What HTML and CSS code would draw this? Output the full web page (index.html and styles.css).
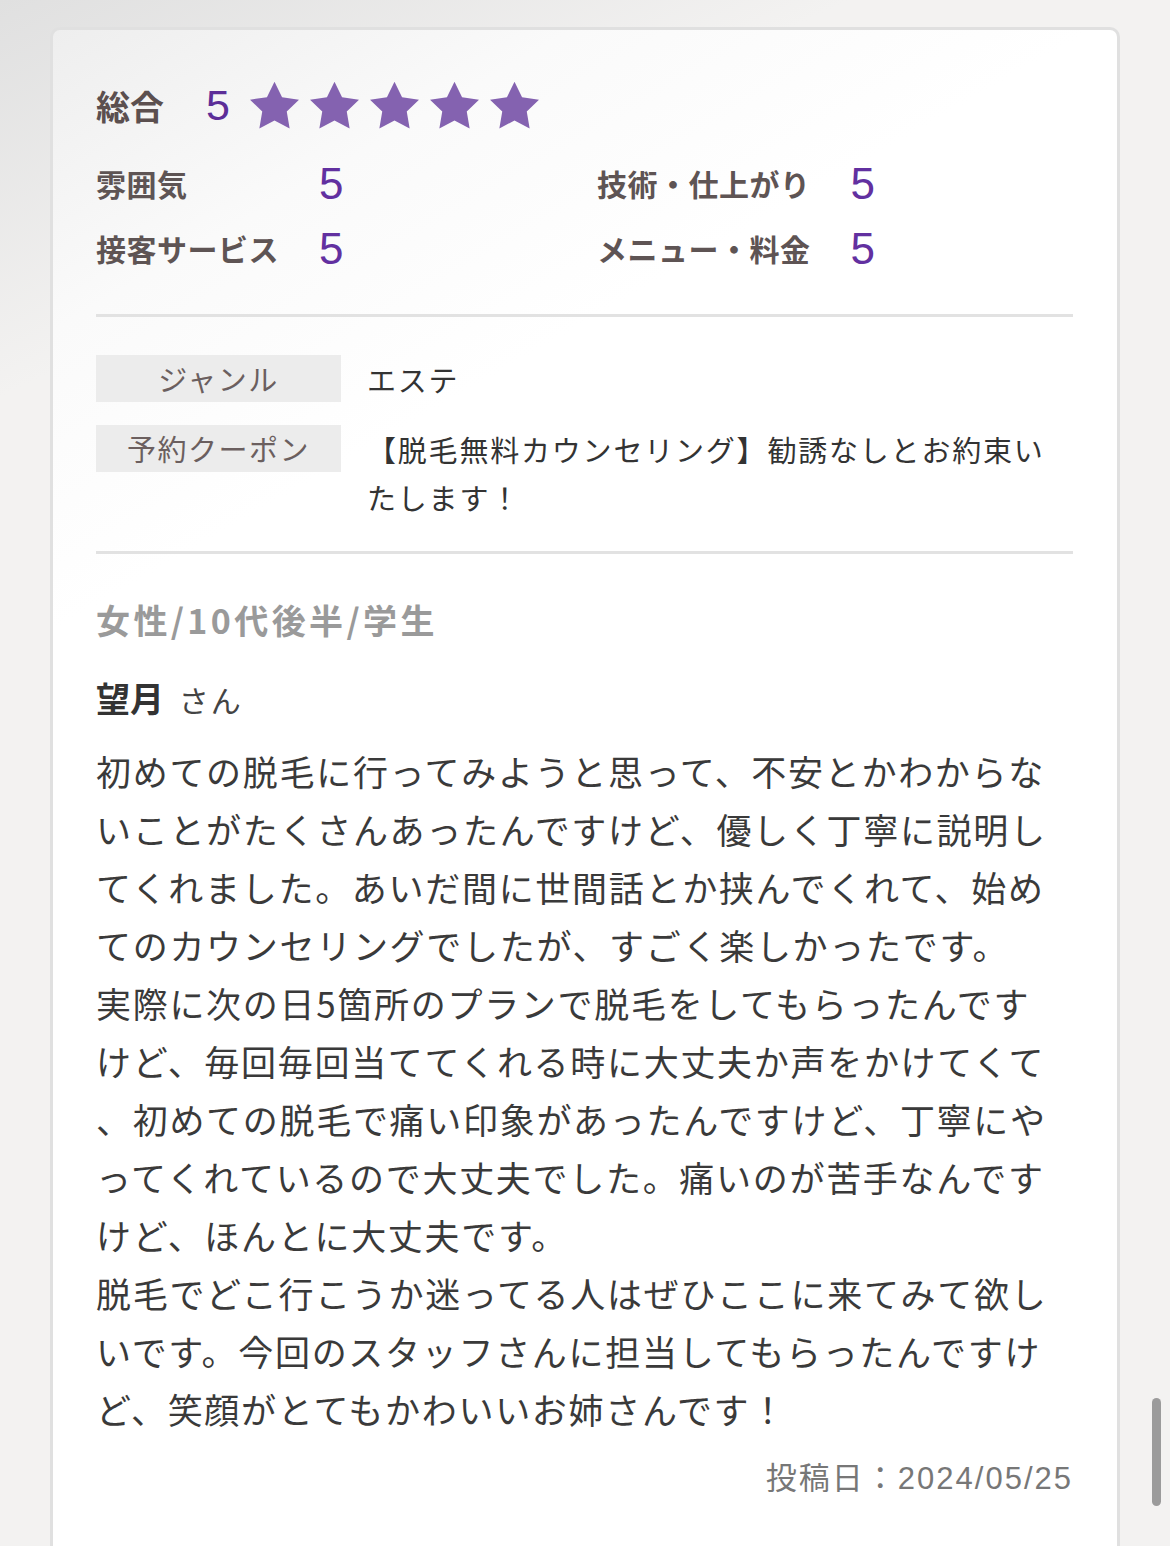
FILE: index.html
```html
<!DOCTYPE html>
<html lang="ja">
<head>
    <meta charset="UTF-8">
    <title>口コミ</title>
    <link rel="stylesheet" href="styles.css">
</head>
<body>
<div class="card">
    <div class="ratings">
        <div class="overall">
            <span class="overall-label">総合</span>
            <span class="overall-num">5</span>
            <span class="stars">
                <svg class="star" viewBox="2 2 20 19.3"><path d="M12 2l3.09 6.26L22 9.27l-5 4.87 1.18 6.88L12 17.77l-6.18 3.25L7 14.14 2 9.27l6.91-1.01z"/></svg>
                <svg class="star" viewBox="2 2 20 19.3"><path d="M12 2l3.09 6.26L22 9.27l-5 4.87 1.18 6.88L12 17.77l-6.18 3.25L7 14.14 2 9.27l6.91-1.01z"/></svg>
                <svg class="star" viewBox="2 2 20 19.3"><path d="M12 2l3.09 6.26L22 9.27l-5 4.87 1.18 6.88L12 17.77l-6.18 3.25L7 14.14 2 9.27l6.91-1.01z"/></svg>
                <svg class="star" viewBox="2 2 20 19.3"><path d="M12 2l3.09 6.26L22 9.27l-5 4.87 1.18 6.88L12 17.77l-6.18 3.25L7 14.14 2 9.27l6.91-1.01z"/></svg>
                <svg class="star" viewBox="2 2 20 19.3"><path d="M12 2l3.09 6.26L22 9.27l-5 4.87 1.18 6.88L12 17.77l-6.18 3.25L7 14.14 2 9.27l6.91-1.01z"/></svg>
            </span>
        </div>
        <div class="sub">
            <div class="sub-col">
                <span class="sub-label">雰囲気</span>
                <span class="sub-num">5</span>
                <span class="sub-label">接客サービス</span>
                <span class="sub-num">5</span>
            </div>
            <div class="sub-col">
                <span class="sub-label">技術・仕上がり</span>
                <span class="sub-num">5</span>
                <span class="sub-label">メニュー・料金</span>
                <span class="sub-num">5</span>
            </div>
        </div>
    </div>

    <dl class="spec">
        <dt>ジャンル</dt>
        <dd>エステ</dd>
        <dt>予約クーポン</dt>
        <dd>【脱毛無料カウンセリング】勧誘なしとお約束いたします！</dd>
    </dl>

    <div class="review">
        <p class="attr">女性/10代後半/学生</p>
        <p class="name"><b>望月</b> さん</p>
        <p class="text">初めての脱毛に行ってみようと思って、不安とかわからないことがたくさんあったんですけど、優しく丁寧に説明してくれました。あいだ間に世間話とか挟んでくれて、始めてのカウンセリングでしたが、すごく楽しかったです。<br>実際に次の日5箇所のプランで脱毛をしてもらったんですけど、毎回毎回当ててくれる時に大丈夫か声をかけてくて、初めての脱毛で痛い印象があったんですけど、丁寧にやってくれているので大丈夫でした。痛いのが苦手なんですけど、ほんとに大丈夫です。<br>脱毛でどこ行こうか迷ってる人はぜひここに来てみて欲しいです。今回のスタッフさんに担当してもらったんですけど、笑顔がとてもかわいいお姉さんです！</p>
        <p class="date">投稿日：2024/05/25</p>
    </div>
</div>
<div class="scrollbar"></div>
</body>
</html>
```

FILE: styles.css
```css
* {
    margin: 0;
    padding: 0;
    box-sizing: border-box;
}

body {
    background: linear-gradient(155deg, #e0e0e0 0, #f3f2f1 360px) #f3f2f1;
    padding: 27px 50px 0;
    font-family: "Noto Sans CJK JP", "Noto Sans", sans-serif;
    color: #333;
    overflow: hidden;
    height: 1546px;
}

.card {
    background: linear-gradient(150deg, #eeeeee 0, #fafafa 260px, #fff 520px);
    border: 3px solid #e0e0e0;
    border-bottom: none;
    border-radius: 10px 10px 0 0;
    padding: 49px 44px 0 43px;
    min-height: 1540px;
}

/* 評価 */
.ratings {
    border-bottom: 3px solid #e2e2e2;
    padding-bottom: 33px;
}

.overall {
    display: flex;
    align-items: center;
    height: 52px;
}

.overall-label {
    font-size: 34px;
    font-weight: bold;
    color: #5b4f4f;
    margin-right: 42px;
}

.overall-num {
    font-family: "Liberation Sans", sans-serif;
    font-size: 43px;
    color: #5c2e98;
    margin-right: 20px;
}

.stars {
    display: flex;
    gap: 11px;
}

.star {
    width: 49px;
    height: 51px;
    fill: #8462b0;
}

.sub {
    display: grid;
    grid-template-columns: 501px 1fr;
    margin-top: 20px;
}

.sub-col {
    display: grid;
    grid-template-columns: auto auto;
    justify-content: start;
    column-gap: 40px;
    align-items: center;
}

.sub-label {
    font-size: 30px;
    font-weight: bold;
    color: #5e5454;
    letter-spacing: 0.5px;
    line-height: 65px;
}

.sub-num {
    font-family: "Liberation Sans", sans-serif;
    font-size: 44px;
    color: #6230a0;
    line-height: 65px;
}

/* ジャンル・クーポン */
.spec {
    display: grid;
    grid-template-columns: 245px 1fr;
    column-gap: 26px;
    row-gap: 22px;
    padding: 38px 0 30px;
    border-bottom: 3px solid #e2e2e2;
}

.spec dt {
    background-color: #ececec;
    height: 47px;
    line-height: 47px;
    text-align: center;
    font-size: 29px;
    letter-spacing: 1.5px;
    color: #6b5f5f;
}

.spec dd {
    font-size: 29px;
    letter-spacing: 1.8px;
    line-height: 48px;
    max-width: 692px;
    color: #333;
    line-break: anywhere;
}

/* 本文 */
.review {
    padding-top: 41px;
}

.attr {
    font-size: 34px;
    font-weight: bold;
    color: #9a9a9a;
    letter-spacing: 3.4px;
    line-height: 50px;
}

.name {
    font-size: 30px;
    letter-spacing: 2px;
    line-height: 50px;
    margin-top: 28px;
    color: #444;
}

.name b {
    font-size: 34px;
    letter-spacing: 0;
    margin-right: 6px;
    color: #333;
}

.text {
    margin-top: 18px;
    max-width: 960px;
    font-size: 35px;
    letter-spacing: 1.7px;
    line-height: 58px;
    color: #3a3a3a;
    line-break: anywhere;
}

.date {
    margin-top: 21px;
    text-align: right;
    font-family: "Liberation Sans", "Noto Sans CJK JP", sans-serif;
    font-size: 31px;
    letter-spacing: 2px;
    line-height: 40px;
    color: #777;
}

.scrollbar {
    position: fixed;
    top: 1398px;
    right: 9px;
    width: 9px;
    height: 108px;
    border-radius: 5px;
    background-color: #9b9b9b;
}
```
